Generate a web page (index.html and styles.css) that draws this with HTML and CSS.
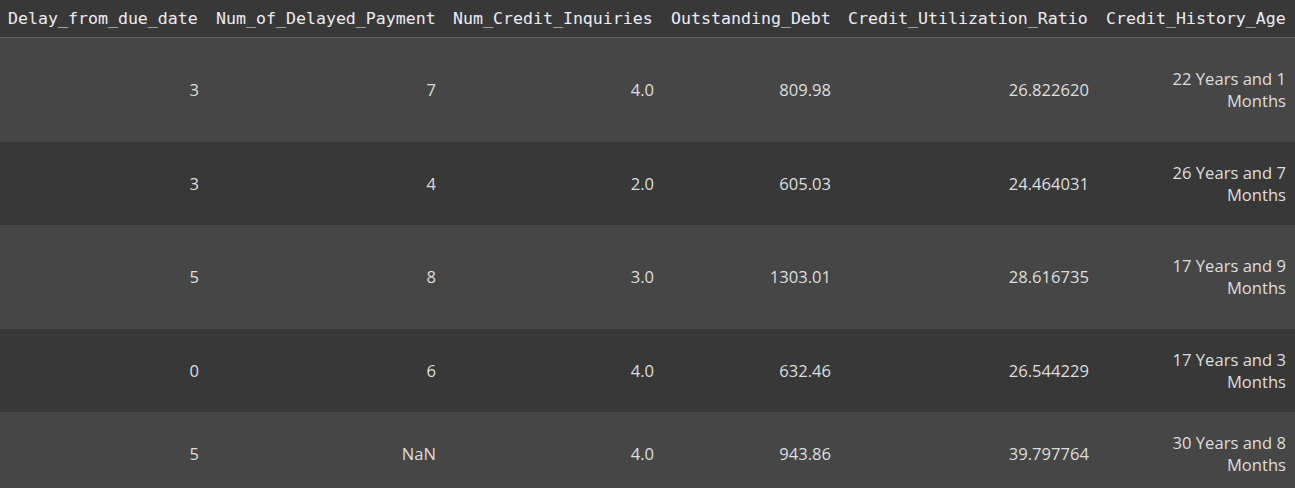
FILE: index.html
```html
<!DOCTYPE html>
<html>
<head>
<meta charset="utf-8">
<link rel="stylesheet" href="styles.css">
</head>
<body>
<table class="df">
  <colgroup>
    <col class="c1"><col class="c2"><col class="c3"><col class="c4"><col class="c5"><col class="c6">
  </colgroup>
  <thead>
    <tr>
      <th>Delay_from_due_date</th>
      <th>Num_of_Delayed_Payment</th>
      <th>Num_Credit_Inquiries</th>
      <th>Outstanding_Debt</th>
      <th>Credit_Utilization_Ratio</th>
      <th>Credit_History_Age</th>
    </tr>
  </thead>
  <tbody>
    <tr class="tall odd">
      <td>3</td><td>7</td><td>4.0</td><td>809.98</td><td>26.822620</td><td class="age">22 Years and 1 Months</td>
    </tr>
    <tr class="short">
      <td>3</td><td>4</td><td>2.0</td><td>605.03</td><td>24.464031</td><td class="age">26 Years and 7 Months</td>
    </tr>
    <tr class="tall odd">
      <td>5</td><td>8</td><td>3.0</td><td>1303.01</td><td>28.616735</td><td class="age">17 Years and 9 Months</td>
    </tr>
    <tr class="short">
      <td>0</td><td>6</td><td>4.0</td><td>632.46</td><td>26.544229</td><td class="age">17 Years and 3 Months</td>
    </tr>
    <tr class="last odd">
      <td>5</td><td>NaN</td><td>4.0</td><td>943.86</td><td>39.797764</td><td class="age">30 Years and 8 Months</td>
    </tr>
  </tbody>
</table>
</body>
</html>
```

FILE: styles.css
```css
html, body {
  margin: 0;
  padding: 0;
  background: #383838;
}

body {
  width: 1295px;
  height: 488px;
  overflow: hidden;
}

.df {
  border-collapse: collapse;
  table-layout: fixed;
  width: 1295px;
}

.c1 { width: 208px; }
.c2 { width: 237px; }
.c3 { width: 218px; }
.c4 { width: 177px; }
.c5 { width: 258px; }
.c6 { width: 197px; }

.df th {
  height: 37px;
  padding: 0 9px 0 8px;
  font-family: "DejaVu Sans Mono", "Liberation Mono", monospace;
  font-size: 16.6px;
  font-weight: normal;
  color: #ececf4;
  text-align: left;
  white-space: nowrap;
  vertical-align: middle;
  border-bottom: 1px solid #5e5e5e;
  background: #383838;
}

.df td {
  padding: 0 9px 0 8px;
  font-family: "Open Sans", "Noto Sans", sans-serif;
  font-size: 16.6px;
  line-height: 22px;
  color: #dedede;
  text-align: right;
  vertical-align: middle;
}

.df td.age {
  padding-left: 30px;
}

.df tr.odd td { background: #464646; }
.df tr.short td { background: #383838; }

.df tr.tall td { height: 104px; }
.df tr.short td { height: 83px; }
.df tr.last td { height: 83px; }
```
